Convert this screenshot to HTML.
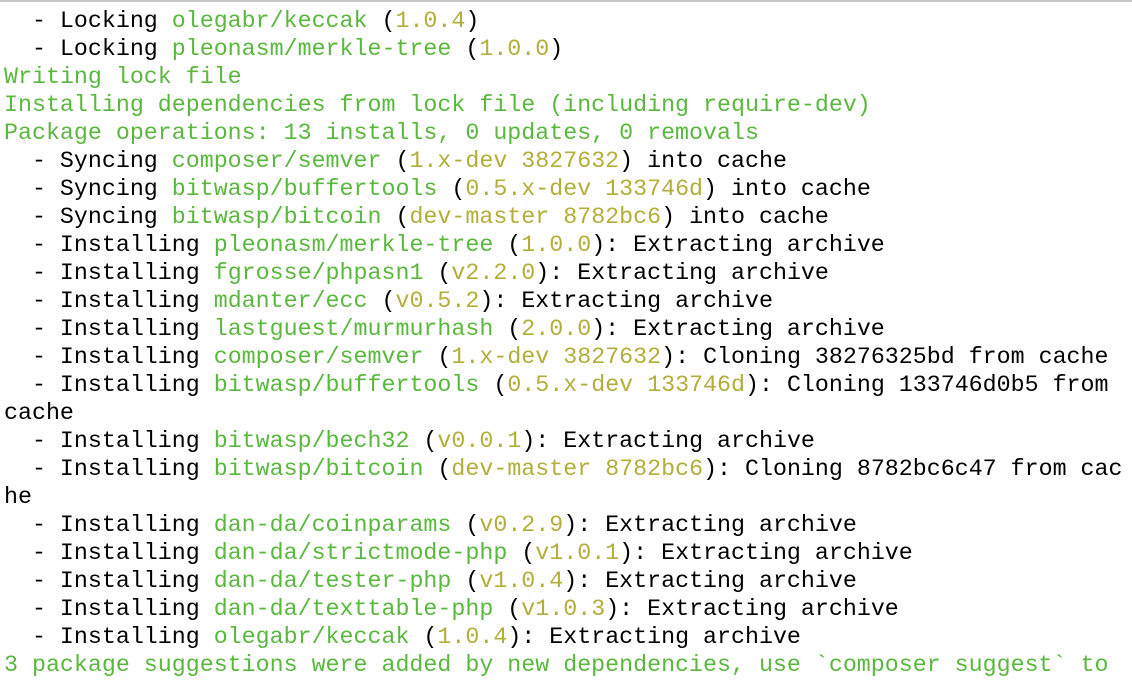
<!DOCTYPE html>
<html><head><style>
html,body{margin:0;padding:0;background:#fff;width:1132px;height:682px;overflow:hidden}
.top{position:absolute;top:0;left:0;width:1132px;height:2px;background:#c8c8c8}
pre{position:absolute;top:7px;left:4px;margin:0;font-family:"Liberation Mono",monospace;font-size:23.3px;line-height:28px;color:#000;white-space:pre}
.g{color:#5ab83e}.y{color:#b2ae3a}
</style></head><body><div class="top"></div>
<pre>  - Locking <span class="g">olegabr/keccak</span> (<span class="y">1.0.4</span>)
  - Locking <span class="g">pleonasm/merkle-tree</span> (<span class="y">1.0.0</span>)
<span class="g">Writing lock file</span>
<span class="g">Installing dependencies from lock file (including require-dev)</span>
<span class="g">Package operations: 13 installs, 0 updates, 0 removals</span>
  - Syncing <span class="g">composer/semver</span> (<span class="y">1.x-dev 3827632</span>) into cache
  - Syncing <span class="g">bitwasp/buffertools</span> (<span class="y">0.5.x-dev 133746d</span>) into cache
  - Syncing <span class="g">bitwasp/bitcoin</span> (<span class="y">dev-master 8782bc6</span>) into cache
  - Installing <span class="g">pleonasm/merkle-tree</span> (<span class="y">1.0.0</span>): Extracting archive
  - Installing <span class="g">fgrosse/phpasn1</span> (<span class="y">v2.2.0</span>): Extracting archive
  - Installing <span class="g">mdanter/ecc</span> (<span class="y">v0.5.2</span>): Extracting archive
  - Installing <span class="g">lastguest/murmurhash</span> (<span class="y">2.0.0</span>): Extracting archive
  - Installing <span class="g">composer/semver</span> (<span class="y">1.x-dev 3827632</span>): Cloning 38276325bd from cache
  - Installing <span class="g">bitwasp/buffertools</span> (<span class="y">0.5.x-dev 133746d</span>): Cloning 133746d0b5 from
cache
  - Installing <span class="g">bitwasp/bech32</span> (<span class="y">v0.0.1</span>): Extracting archive
  - Installing <span class="g">bitwasp/bitcoin</span> (<span class="y">dev-master 8782bc6</span>): Cloning 8782bc6c47 from cac
he
  - Installing <span class="g">dan-da/coinparams</span> (<span class="y">v0.2.9</span>): Extracting archive
  - Installing <span class="g">dan-da/strictmode-php</span> (<span class="y">v1.0.1</span>): Extracting archive
  - Installing <span class="g">dan-da/tester-php</span> (<span class="y">v1.0.4</span>): Extracting archive
  - Installing <span class="g">dan-da/texttable-php</span> (<span class="y">v1.0.3</span>): Extracting archive
  - Installing <span class="g">olegabr/keccak</span> (<span class="y">1.0.4</span>): Extracting archive
<span class="g">3 package suggestions were added by new dependencies, use `composer suggest` to</span></pre>
</body></html>
